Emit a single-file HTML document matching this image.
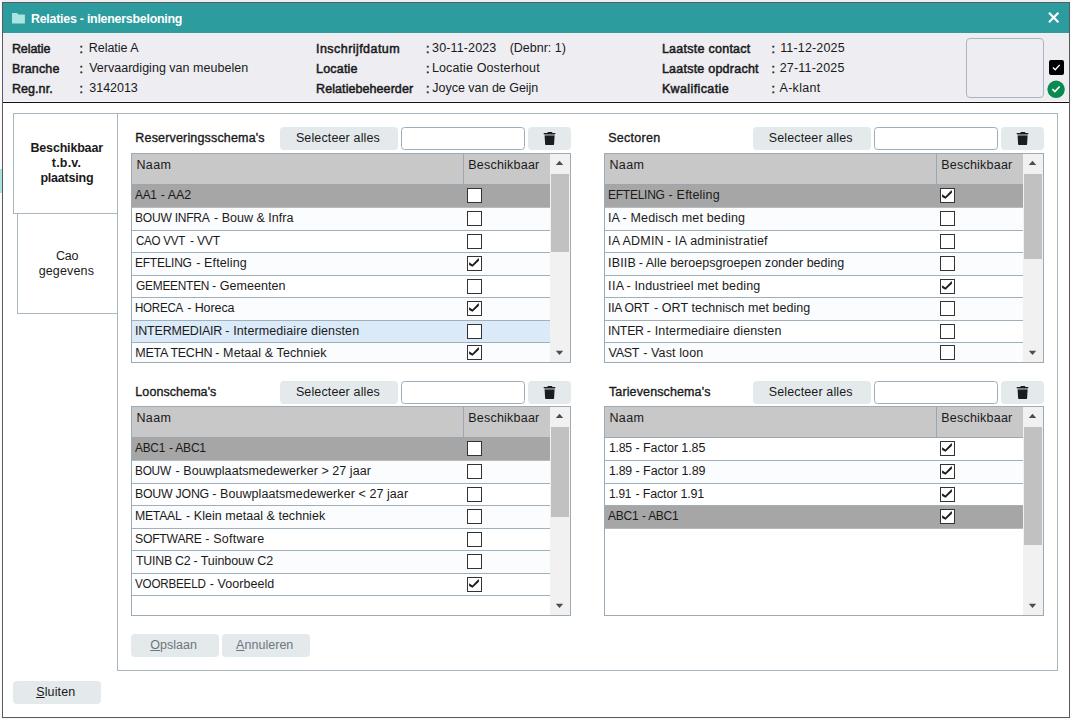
<!DOCTYPE html>
<html lang="nl"><head><meta charset="utf-8"><title>Relaties - inlenersbeloning</title>
<style>
html,body{margin:0;padding:0;}
body{width:1071px;height:719px;overflow:hidden;background:#f0f0f4;position:relative;font-family:"Liberation Sans",sans-serif;font-size:12.5px;color:#1a1a1a;}
.abs{position:absolute;}
#edgeL{left:0;top:0;width:2px;height:719px;background:#fbfbfd;}
#edgeT{left:0;top:0;width:1071px;height:2px;background:#eeeef2;}
#edgeMark{left:0;top:169px;width:2px;height:24px;background:#a9e4de;}
#win{left:2px;top:2px;width:1066px;height:714px;border:1px solid #5a5a5a;background:#fff;}
#edgeR{left:1070px;top:0;width:1px;height:719px;background:#fbfbfd;}
#edgeB{left:0;top:718px;width:1071px;height:1px;background:#f6f6f8;}
#title{left:3px;top:3px;width:1066px;height:30px;background:#2d9c9e;}
#info{left:3px;top:33px;width:1066px;height:68px;background:#ededf2;}
#hrw{left:3px;top:101px;width:1066px;height:1px;background:#f8f8fa;}
#hr{left:3px;top:102px;width:1066px;height:1px;background:#111;}
#imgbox{left:966px;top:38px;width:76px;height:58px;border:1px solid #a9b6bf;border-radius:4px;}
#chkblack{left:1049px;top:60px;width:15px;height:15px;background:#000;border-radius:2px;}
.tab{position:absolute;border:1px solid #a9b6bf;background:#fff;box-sizing:border-box;}
#panel{left:117px;top:113px;width:939px;height:556px;border:1px solid #a9b6bf;box-sizing:content-box;background:#fff;}
.btn{position:absolute;background:#e4e9ec;border-radius:4px;}
.inp{position:absolute;border:1px solid #9fadb8;border-radius:3.5px;background:#fff;box-sizing:border-box;}
.grid{position:absolute;width:438px;height:208px;border:1px solid #9cabb6;background:#fff;overflow:hidden;}
.gh{position:absolute;left:0;top:0;width:418px;height:30px;background:#c8c8c8;border-bottom:1px solid #9aa7b0;}
.ghd{position:absolute;left:331px;top:0;width:1px;height:30px;background:#9aa7b0;}
.row{position:absolute;left:0;width:418px;background:#fff;border-bottom:1px solid #a0b0bb;box-sizing:border-box;}
.row.alt{background:#fbfcfd;}
.row.sel{background:#a6a6a6;border-bottom-color:#b4bcc2;}
.row.hot{background:#daeaf8;}
.cb{position:absolute;left:335px;width:13px;height:13px;border:1px solid #333;background:#fff;}
.sb{position:absolute;left:418px;top:0;width:20px;height:208px;background:#f1f1f1;}
.thumb{position:absolute;left:1px;width:18px;background:#c1c1c1;}
.t{position:absolute;white-space:nowrap;line-height:16px;transform-origin:0 0;}
.t.b{font-weight:bold;font-size:12.5px;}
.t.r{font-weight:normal;font-size:12.5px;}
.t.m{font-weight:normal;font-size:12.5px;-webkit-text-stroke:0.35px;}
.t.l{font-weight:normal;font-size:12.5px;-webkit-text-stroke:0.5px;}
u{text-decoration:underline;}
</style></head>
<body>
<div class="abs" id="edgeT"></div><div class="abs" id="edgeL"></div><div class="abs" id="edgeMark"></div><div class="abs" id="edgeR"></div><div class="abs" id="edgeB"></div>
<div class="abs" id="win"></div>
<div class="abs" id="title"><svg width="13" height="11" viewBox="0 0 13.6 11.4" preserveAspectRatio="none" style="position:absolute;left:9px;top:10px"><path d="M0.5 0 H5.2 L6.8 1.6 H13 Q13.5 1.6 13.5 2.1 V10.5 Q13.5 11 13 11 H0.5 Q0 11 0 10.5 V0.5 Q0 0 0.5 0 Z" fill="#a9e6df"/></svg><svg width="14" height="14" viewBox="0 0 14 14" style="position:absolute;left:1044px;top:8px"><path d="M2.0 1.8 L11.4 11.2 M11.4 1.8 L2.0 11.2" stroke="#fff" stroke-width="2.15" fill="none"/></svg></div>
<div class="abs" id="info"></div><div class="abs" id="hrw"></div><div class="abs" id="hr"></div>
<div class="abs" id="imgbox"></div>
<div class="abs" id="chkblack"><svg width="15" height="15" viewBox="0 0 15 15" style="position:absolute;left:0;top:0"><path d="M3.9 7.4 L6.3 9.7 L10.7 4.9" fill="none" stroke="#fff" stroke-width="1.4"/></svg></div>
<svg class="abs" width="20" height="20" viewBox="0 0 20 20" style="left:1046px;top:79px"><circle cx="10.1" cy="10.3" r="8.7" fill="#0b8a50"/><path d="M6.4 10.2 L8.9 12.6 L13.6 7.5" fill="none" stroke="#fff" stroke-width="1.6"/></svg>
<div class="abs" id="panel"></div>
<div class="tab" style="left:13px;top:113px;width:105px;height:101px"></div>
<div class="tab" style="left:17px;top:213px;width:101px;height:101px"></div>
<div class="btn" style="left:280px;top:127px;width:118px;height:23px"></div>
<div class="inp" style="left:401px;top:127px;width:124px;height:23px"></div>
<div class="btn" style="left:528px;top:127px;width:43px;height:23px"><svg width="43" height="23" viewBox="0 0 43 23" style="position:absolute;left:0;top:0"><path d="M15.7 5.9 H19.2 L19.9 5.1 H23.9 L24.6 5.9 H27.3 V7.3 H15.7 Z M16.6 8.4 H26.6 L26.1 16.9 Q26 18.1 24.8 18.1 H18.4 Q17.2 18.1 17.1 16.9 Z" fill="#191d20"/><rect x="16.6" y="7.3" width="10" height="1.1" fill="#191d20" opacity="0.5"/></svg></div>
<div class="grid" style="left:131px;top:153px">
<div class="gh"><div class="ghd"></div></div>
<div class="row sel" style="top:31px;height:23px"><div class="cb" style="top:3px"></div></div>
<div class="row alt" style="top:54px;height:23px"><div class="cb" style="top:3px"></div></div>
<div class="row" style="top:77px;height:22px"><div class="cb" style="top:3px"></div></div>
<div class="row alt" style="top:99px;height:23px"><div class="cb" style="top:3px"><svg width="13" height="13" viewBox="0 0 13 13" style="position:absolute;left:0;top:0"><path d="M1.1 5.2 L4.4 7.5 L10.4 1.3 L10.9 1.6 L10.9 3.7 L4.5 9.8 L1.1 7.9 Z" fill="#1c1c1c"/></svg></div></div>
<div class="row" style="top:122px;height:22px"><div class="cb" style="top:3px"></div></div>
<div class="row alt" style="top:144px;height:23px"><div class="cb" style="top:3px"><svg width="13" height="13" viewBox="0 0 13 13" style="position:absolute;left:0;top:0"><path d="M1.1 5.2 L4.4 7.5 L10.4 1.3 L10.9 1.6 L10.9 3.7 L4.5 9.8 L1.1 7.9 Z" fill="#1c1c1c"/></svg></div></div>
<div class="row hot" style="top:167px;height:22px"><div class="cb" style="top:3px"></div></div>
<div class="row alt" style="top:189px;height:23px"><div class="cb" style="top:2px"><svg width="13" height="13" viewBox="0 0 13 13" style="position:absolute;left:0;top:0"><path d="M1.1 5.2 L4.4 7.5 L10.4 1.3 L10.9 1.6 L10.9 3.7 L4.5 9.8 L1.1 7.9 Z" fill="#1c1c1c"/></svg></div></div>
<div class="sb"><svg width="20" height="208" viewBox="0 0 20 208" style="position:absolute;left:0;top:0"><path d="M5.8 10.9 L13.2 10.9 L9.5 6.7 Z M5.8 196.8 L13.2 196.8 L9.5 200.9 Z" fill="#4d4d4d"/></svg><div class="thumb" style="top:20px;height:78px"></div></div>
</div>
<div class="btn" style="left:753px;top:127px;width:118px;height:23px"></div>
<div class="inp" style="left:874px;top:127px;width:124px;height:23px"></div>
<div class="btn" style="left:1001px;top:127px;width:43px;height:23px"><svg width="43" height="23" viewBox="0 0 43 23" style="position:absolute;left:0;top:0"><path d="M15.7 5.9 H19.2 L19.9 5.1 H23.9 L24.6 5.9 H27.3 V7.3 H15.7 Z M16.6 8.4 H26.6 L26.1 16.9 Q26 18.1 24.8 18.1 H18.4 Q17.2 18.1 17.1 16.9 Z" fill="#191d20"/><rect x="16.6" y="7.3" width="10" height="1.1" fill="#191d20" opacity="0.5"/></svg></div>
<div class="grid" style="left:604px;top:153px">
<div class="gh"><div class="ghd"></div></div>
<div class="row sel" style="top:31px;height:23px"><div class="cb" style="top:3px"><svg width="13" height="13" viewBox="0 0 13 13" style="position:absolute;left:0;top:0"><path d="M1.1 5.2 L4.4 7.5 L10.4 1.3 L10.9 1.6 L10.9 3.7 L4.5 9.8 L1.1 7.9 Z" fill="#1c1c1c"/></svg></div></div>
<div class="row alt" style="top:54px;height:23px"><div class="cb" style="top:3px"></div></div>
<div class="row" style="top:77px;height:22px"><div class="cb" style="top:3px"></div></div>
<div class="row alt" style="top:99px;height:23px"><div class="cb" style="top:3px"></div></div>
<div class="row" style="top:122px;height:22px"><div class="cb" style="top:3px"><svg width="13" height="13" viewBox="0 0 13 13" style="position:absolute;left:0;top:0"><path d="M1.1 5.2 L4.4 7.5 L10.4 1.3 L10.9 1.6 L10.9 3.7 L4.5 9.8 L1.1 7.9 Z" fill="#1c1c1c"/></svg></div></div>
<div class="row alt" style="top:144px;height:23px"><div class="cb" style="top:3px"></div></div>
<div class="row" style="top:167px;height:22px"><div class="cb" style="top:3px"></div></div>
<div class="row alt" style="top:189px;height:23px"><div class="cb" style="top:2px"></div></div>
<div class="sb"><svg width="20" height="208" viewBox="0 0 20 208" style="position:absolute;left:0;top:0"><path d="M5.8 10.9 L13.2 10.9 L9.5 6.7 Z M5.8 196.8 L13.2 196.8 L9.5 200.9 Z" fill="#4d4d4d"/></svg><div class="thumb" style="top:20px;height:85px"></div></div>
</div>
<div class="btn" style="left:280px;top:381px;width:118px;height:23px"></div>
<div class="inp" style="left:401px;top:381px;width:124px;height:23px"></div>
<div class="btn" style="left:528px;top:381px;width:43px;height:23px"><svg width="43" height="23" viewBox="0 0 43 23" style="position:absolute;left:0;top:0"><path d="M15.7 5.9 H19.2 L19.9 5.1 H23.9 L24.6 5.9 H27.3 V7.3 H15.7 Z M16.6 8.4 H26.6 L26.1 16.9 Q26 18.1 24.8 18.1 H18.4 Q17.2 18.1 17.1 16.9 Z" fill="#191d20"/><rect x="16.6" y="7.3" width="10" height="1.1" fill="#191d20" opacity="0.5"/></svg></div>
<div class="grid" style="left:131px;top:406px">
<div class="gh"><div class="ghd"></div></div>
<div class="row sel" style="top:31px;height:23px"><div class="cb" style="top:3px"></div></div>
<div class="row alt" style="top:54px;height:23px"><div class="cb" style="top:3px"></div></div>
<div class="row" style="top:77px;height:22px"><div class="cb" style="top:3px"></div></div>
<div class="row alt" style="top:99px;height:23px"><div class="cb" style="top:3px"></div></div>
<div class="row" style="top:122px;height:22px"><div class="cb" style="top:3px"></div></div>
<div class="row alt" style="top:144px;height:23px"><div class="cb" style="top:3px"></div></div>
<div class="row" style="top:167px;height:22px"><div class="cb" style="top:3px"><svg width="13" height="13" viewBox="0 0 13 13" style="position:absolute;left:0;top:0"><path d="M1.1 5.2 L4.4 7.5 L10.4 1.3 L10.9 1.6 L10.9 3.7 L4.5 9.8 L1.1 7.9 Z" fill="#1c1c1c"/></svg></div></div>
<div class="sb"><svg width="20" height="208" viewBox="0 0 20 208" style="position:absolute;left:0;top:0"><path d="M5.8 10.9 L13.2 10.9 L9.5 6.7 Z M5.8 196.8 L13.2 196.8 L9.5 200.9 Z" fill="#4d4d4d"/></svg><div class="thumb" style="top:20px;height:90px"></div></div>
</div>
<div class="btn" style="left:753px;top:381px;width:118px;height:23px"></div>
<div class="inp" style="left:874px;top:381px;width:124px;height:23px"></div>
<div class="btn" style="left:1001px;top:381px;width:43px;height:23px"><svg width="43" height="23" viewBox="0 0 43 23" style="position:absolute;left:0;top:0"><path d="M15.7 5.9 H19.2 L19.9 5.1 H23.9 L24.6 5.9 H27.3 V7.3 H15.7 Z M16.6 8.4 H26.6 L26.1 16.9 Q26 18.1 24.8 18.1 H18.4 Q17.2 18.1 17.1 16.9 Z" fill="#191d20"/><rect x="16.6" y="7.3" width="10" height="1.1" fill="#191d20" opacity="0.5"/></svg></div>
<div class="grid" style="left:604px;top:406px">
<div class="gh"><div class="ghd"></div></div>
<div class="row" style="top:31px;height:23px"><div class="cb" style="top:3px"><svg width="13" height="13" viewBox="0 0 13 13" style="position:absolute;left:0;top:0"><path d="M1.1 5.2 L4.4 7.5 L10.4 1.3 L10.9 1.6 L10.9 3.7 L4.5 9.8 L1.1 7.9 Z" fill="#1c1c1c"/></svg></div></div>
<div class="row alt" style="top:54px;height:23px"><div class="cb" style="top:3px"><svg width="13" height="13" viewBox="0 0 13 13" style="position:absolute;left:0;top:0"><path d="M1.1 5.2 L4.4 7.5 L10.4 1.3 L10.9 1.6 L10.9 3.7 L4.5 9.8 L1.1 7.9 Z" fill="#1c1c1c"/></svg></div></div>
<div class="row" style="top:77px;height:22px"><div class="cb" style="top:3px"><svg width="13" height="13" viewBox="0 0 13 13" style="position:absolute;left:0;top:0"><path d="M1.1 5.2 L4.4 7.5 L10.4 1.3 L10.9 1.6 L10.9 3.7 L4.5 9.8 L1.1 7.9 Z" fill="#1c1c1c"/></svg></div></div>
<div class="row sel" style="top:99px;height:23px"><div class="cb" style="top:3px"><svg width="13" height="13" viewBox="0 0 13 13" style="position:absolute;left:0;top:0"><path d="M1.1 5.2 L4.4 7.5 L10.4 1.3 L10.9 1.6 L10.9 3.7 L4.5 9.8 L1.1 7.9 Z" fill="#1c1c1c"/></svg></div></div>
<div class="sb"><svg width="20" height="208" viewBox="0 0 20 208" style="position:absolute;left:0;top:0"><path d="M5.8 10.9 L13.2 10.9 L9.5 6.7 Z M5.8 196.8 L13.2 196.8 L9.5 200.9 Z" fill="#4d4d4d"/></svg><div class="thumb" style="top:20px;height:118px"></div></div>
</div>
<div class="btn" style="left:131px;top:634px;width:88px;height:23px"></div>
<div class="btn" style="left:222px;top:634px;width:88px;height:23px"></div>
<div class="btn" style="left:13px;top:681px;width:88px;height:23px"></div>
<div class="t b" style="left:30.73px;top:11px;letter-spacing:-0.25px;transform:scaleX(0.9926);color:#fff;">Relaties - inlenersbeloning</div>
<div class="t l" style="left:11.89px;top:41px;letter-spacing:-0.057px;">Relatie</div>
<div class="t l" style="left:11.89px;top:61px;letter-spacing:0.164px;">Branche</div>
<div class="t l" style="left:11.89px;top:81px;letter-spacing:0.081px;">Reg.nr.</div>
<div class="t l" style="left:316.01px;top:41px;letter-spacing:0.45px;">Inschrijfdatum</div>
<div class="t l" style="left:316.09px;top:61px;letter-spacing:0.193px;">Locatie</div>
<div class="t l" style="left:316.09px;top:81px;letter-spacing:0.074px;">Relatiebeheerder</div>
<div class="t l" style="left:661.89px;top:41px;letter-spacing:0.262px;">Laatste contact</div>
<div class="t l" style="left:661.89px;top:61px;letter-spacing:0.236px;">Laatste opdracht</div>
<div class="t l" style="left:661.89px;top:81px;letter-spacing:0.388px;">Kwalificatie</div>
<div class="t l" style="left:79.52px;top:41px;">:</div>
<div class="t l" style="left:425.92px;top:41px;">:</div>
<div class="t l" style="left:771.62px;top:41px;">:</div>
<div class="t l" style="left:79.52px;top:61px;">:</div>
<div class="t l" style="left:425.92px;top:61px;">:</div>
<div class="t l" style="left:771.62px;top:61px;">:</div>
<div class="t l" style="left:79.52px;top:81px;">:</div>
<div class="t l" style="left:425.92px;top:81px;">:</div>
<div class="t l" style="left:771.62px;top:81px;">:</div>
<div class="t r" style="left:88.8px;top:40px;letter-spacing:-0.035px;">Relatie A</div>
<div class="t r" style="left:89.13px;top:60px;letter-spacing:0.022px;">Vervaardiging van meubelen</div>
<div class="t r" style="left:89.31px;top:80px;letter-spacing:-0.026px;">3142013</div>
<div class="t r" style="left:432.11px;top:40px;letter-spacing:0.123px;">30-11-2023</div>
<div class="t r" style="left:509.63px;top:40px;letter-spacing:-0.006px;">(Debnr: 1)</div>
<div class="t r" style="left:431.9px;top:60px;letter-spacing:0.126px;">Locatie Oosterhout</div>
<div class="t r" style="left:432.35px;top:80px;letter-spacing:-0.022px;">Joyce van de Geijn</div>
<div class="t r" style="left:780.14px;top:40px;letter-spacing:0.172px;">11-12-2025</div>
<div class="t r" style="left:779.68px;top:60px;letter-spacing:0.198px;">27-11-2025</div>
<div class="t r" style="left:779.55px;top:80px;letter-spacing:0.283px;">A-klant</div>
<div class="t b" style="left:30.52px;top:140px;letter-spacing:-0.185px;">Beschikbaar</div>
<div class="t b" style="left:51.83px;top:155px;letter-spacing:0.179px;">t.b.v.</div>
<div class="t b" style="left:40.41px;top:170px;letter-spacing:-0.199px;">plaatsing</div>
<div class="t r" style="left:56.05px;top:248px;letter-spacing:-0.25px;">Cao</div>
<div class="t r" style="left:38.64px;top:263px;letter-spacing:0.151px;">gegevens</div>
<div class="t m" style="left:135.33px;top:130px;letter-spacing:0.169px;">Reserveringsschema's</div>
<div class="t m" style="left:608.23px;top:130px;letter-spacing:0.268px;">Sectoren</div>
<div class="t m" style="left:135.33px;top:384px;letter-spacing:0.074px;">Loonschema's</div>
<div class="t m" style="left:609.0px;top:384px;letter-spacing:0.12px;">Tarievenschema's</div>
<div class="t r" style="left:295.89px;top:130px;letter-spacing:0.138px;">Selecteer alles</div>
<div class="t r" style="left:768.69px;top:130px;letter-spacing:0.138px;">Selecteer alles</div>
<div class="t r" style="left:295.89px;top:384px;letter-spacing:0.138px;">Selecteer alles</div>
<div class="t r" style="left:768.69px;top:384px;letter-spacing:0.138px;">Selecteer alles</div>
<div class="t r" style="left:136.4px;top:157px;letter-spacing:0.42px;">Naam</div>
<div class="t r" style="left:468.3px;top:157px;letter-spacing:0.216px;">Beschikbaar</div>
<div class="t r" style="left:609.4px;top:157px;letter-spacing:0.42px;">Naam</div>
<div class="t r" style="left:941.3px;top:157px;letter-spacing:0.216px;">Beschikbaar</div>
<div class="t r" style="left:136.4px;top:410px;letter-spacing:0.42px;">Naam</div>
<div class="t r" style="left:468.3px;top:410px;letter-spacing:0.216px;">Beschikbaar</div>
<div class="t r" style="left:609.4px;top:410px;letter-spacing:0.42px;">Naam</div>
<div class="t r" style="left:941.3px;top:410px;letter-spacing:0.216px;">Beschikbaar</div>
<div class="t r" style="left:135.36px;top:187px;letter-spacing:-0.25px;transform:scaleX(0.9474);">AA1 </div>
<div class="t r" style="left:160.71px;top:187px;letter-spacing:-0.004px;">- AA2</div>
<div class="t r" style="left:135.33px;top:210px;letter-spacing:-0.25px;transform:scaleX(0.9649);">BOUW INFRA </div>
<div class="t r" style="left:214.11px;top:210px;letter-spacing:0.008px;">- Bouw &amp; Infra</div>
<div class="t r" style="left:135.6px;top:233px;letter-spacing:-0.25px;transform:scaleX(0.9254);">CAO VVT </div>
<div class="t r" style="left:190.13px;top:233px;letter-spacing:-0.25px;transform:scaleX(0.972);">- VVT</div>
<div class="t r" style="left:135.34px;top:255px;letter-spacing:-0.25px;transform:scaleX(0.9588);">EFTELING </div>
<div class="t r" style="left:196.21px;top:255px;letter-spacing:0.129px;">- Efteling</div>
<div class="t r" style="left:135.6px;top:278px;letter-spacing:-0.25px;transform:scaleX(0.9515);">GEMEENTEN </div>
<div class="t r" style="left:211.91px;top:278px;letter-spacing:0.05px;">- Gemeenten</div>
<div class="t r" style="left:135.37px;top:300px;letter-spacing:-0.25px;transform:scaleX(0.9225);">HORECA </div>
<div class="t r" style="left:187.21px;top:300px;letter-spacing:-0.082px;">- Horeca</div>
<div class="t r" style="left:135.0px;top:323px;letter-spacing:-0.199px;">INTERMEDIAIR </div>
<div class="t r" style="left:225.31px;top:323px;letter-spacing:0.109px;">- Intermediaire diensten</div>
<div class="t r" style="left:135.3px;top:345px;letter-spacing:-0.25px;">META TECHN </div>
<div class="t r" style="left:215.31px;top:345px;letter-spacing:0.095px;">- Metaal &amp; Techniek</div>
<div class="t r" style="left:608.24px;top:187px;letter-spacing:-0.25px;transform:scaleX(0.9588);">EFTELING </div>
<div class="t r" style="left:668.61px;top:187px;letter-spacing:0.185px;">- Efteling</div>
<div class="t r" style="left:608.1px;top:210px;letter-spacing:-0.078px;">IA </div>
<div class="t r" style="left:622.51px;top:210px;letter-spacing:0.157px;">- Medisch met beding</div>
<div class="t r" style="left:608.1px;top:233px;letter-spacing:0.194px;">IA ADMIN </div>
<div class="t r" style="left:666.71px;top:233px;letter-spacing:0.24px;">- IA administratief</div>
<div class="t r" style="left:608.1px;top:255px;letter-spacing:0.144px;">IBIIB </div>
<div class="t r" style="left:638.81px;top:255px;letter-spacing:0.013px;">- Alle beroepsgroepen zonder beding</div>
<div class="t r" style="left:608.1px;top:278px;letter-spacing:0.335px;">IIA </div>
<div class="t r" style="left:626.61px;top:278px;letter-spacing:0.13px;">- Industrieel met beding</div>
<div class="t r" style="left:608.13px;top:300px;letter-spacing:-0.25px;transform:scaleX(0.9713);">IIA ORT </div>
<div class="t r" style="left:654.11px;top:300px;letter-spacing:0.04px;">- ORT technisch met beding</div>
<div class="t r" style="left:608.11px;top:323px;letter-spacing:-0.25px;transform:scaleX(0.9867);">INTER </div>
<div class="t r" style="left:646.81px;top:323px;letter-spacing:0.142px;">- Intermediaire diensten</div>
<div class="t r" style="left:608.53px;top:345px;letter-spacing:-0.25px;">VAST </div>
<div class="t r" style="left:643.21px;top:345px;letter-spacing:0.115px;">- Vast loon</div>
<div class="t r" style="left:135.46px;top:440px;letter-spacing:-0.25px;transform:scaleX(0.9475);">ABC1 </div>
<div class="t r" style="left:169.33px;top:440px;letter-spacing:-0.25px;transform:scaleX(0.9674);">- ABC1</div>
<div class="t r" style="left:135.45px;top:463px;letter-spacing:-0.25px;transform:scaleX(0.9456);">BOUW </div>
<div class="t r" style="left:175.51px;top:463px;letter-spacing:0.061px;">- Bouwplaatsmedewerker &gt; 27 jaar</div>
<div class="t r" style="left:135.41px;top:486px;letter-spacing:-0.25px;transform:scaleX(0.9876);">BOUW JONG </div>
<div class="t r" style="left:212.21px;top:486px;letter-spacing:0.076px;">- Bouwplaatsmedewerker &lt; 27 jaar</div>
<div class="t r" style="left:135.42px;top:508px;letter-spacing:-0.25px;transform:scaleX(0.9791);">METAAL </div>
<div class="t r" style="left:186.11px;top:508px;letter-spacing:0.033px;">- Klein metaal &amp; techniek</div>
<div class="t r" style="left:135.41px;top:531px;letter-spacing:-0.25px;transform:scaleX(0.9763);">SOFTWARE </div>
<div class="t r" style="left:205.21px;top:531px;letter-spacing:0.222px;">- Software</div>
<div class="t r" style="left:136.23px;top:553px;letter-spacing:-0.25px;transform:scaleX(0.9901);">TUINB C2 </div>
<div class="t r" style="left:193.51px;top:553px;letter-spacing:-0.071px;">- Tuinbouw C2</div>
<div class="t r" style="left:135.44px;top:576px;letter-spacing:-0.25px;transform:scaleX(0.9343);">VOORBEELD </div>
<div class="t r" style="left:209.71px;top:576px;letter-spacing:0.061px;">- Voorbeeld</div>
<div class="t r" style="left:609.15px;top:440px;letter-spacing:-0.25px;transform:scaleX(0.9816);">1.85 </div>
<div class="t r" style="left:635.61px;top:440px;letter-spacing:-0.09px;">- Factor 1.85</div>
<div class="t r" style="left:609.15px;top:463px;letter-spacing:-0.25px;transform:scaleX(0.9825);">1.89 </div>
<div class="t r" style="left:635.61px;top:463px;letter-spacing:-0.085px;">- Factor 1.89</div>
<div class="t r" style="left:609.18px;top:486px;letter-spacing:-0.25px;transform:scaleX(0.9503);">1.91 </div>
<div class="t r" style="left:635.61px;top:486px;letter-spacing:-0.192px;">- Factor 1.91</div>
<div class="t r" style="left:608.36px;top:508px;letter-spacing:-0.25px;transform:scaleX(0.9571);">ABC1 </div>
<div class="t r" style="left:642.34px;top:508px;letter-spacing:-0.25px;transform:scaleX(0.9541);">- ABC1</div>
<div class="t r" style="left:150.2px;top:637px;letter-spacing:0.052px;color:#6b777e;"><u>O</u>pslaan</div>
<div class="t r" style="left:236.1px;top:637px;letter-spacing:0.027px;color:#6b777e;"><u>A</u>nnuleren</div>
<div class="t r" style="left:36.2px;top:684px;letter-spacing:0.127px;"><u>S</u>luiten</div>
</body></html>
